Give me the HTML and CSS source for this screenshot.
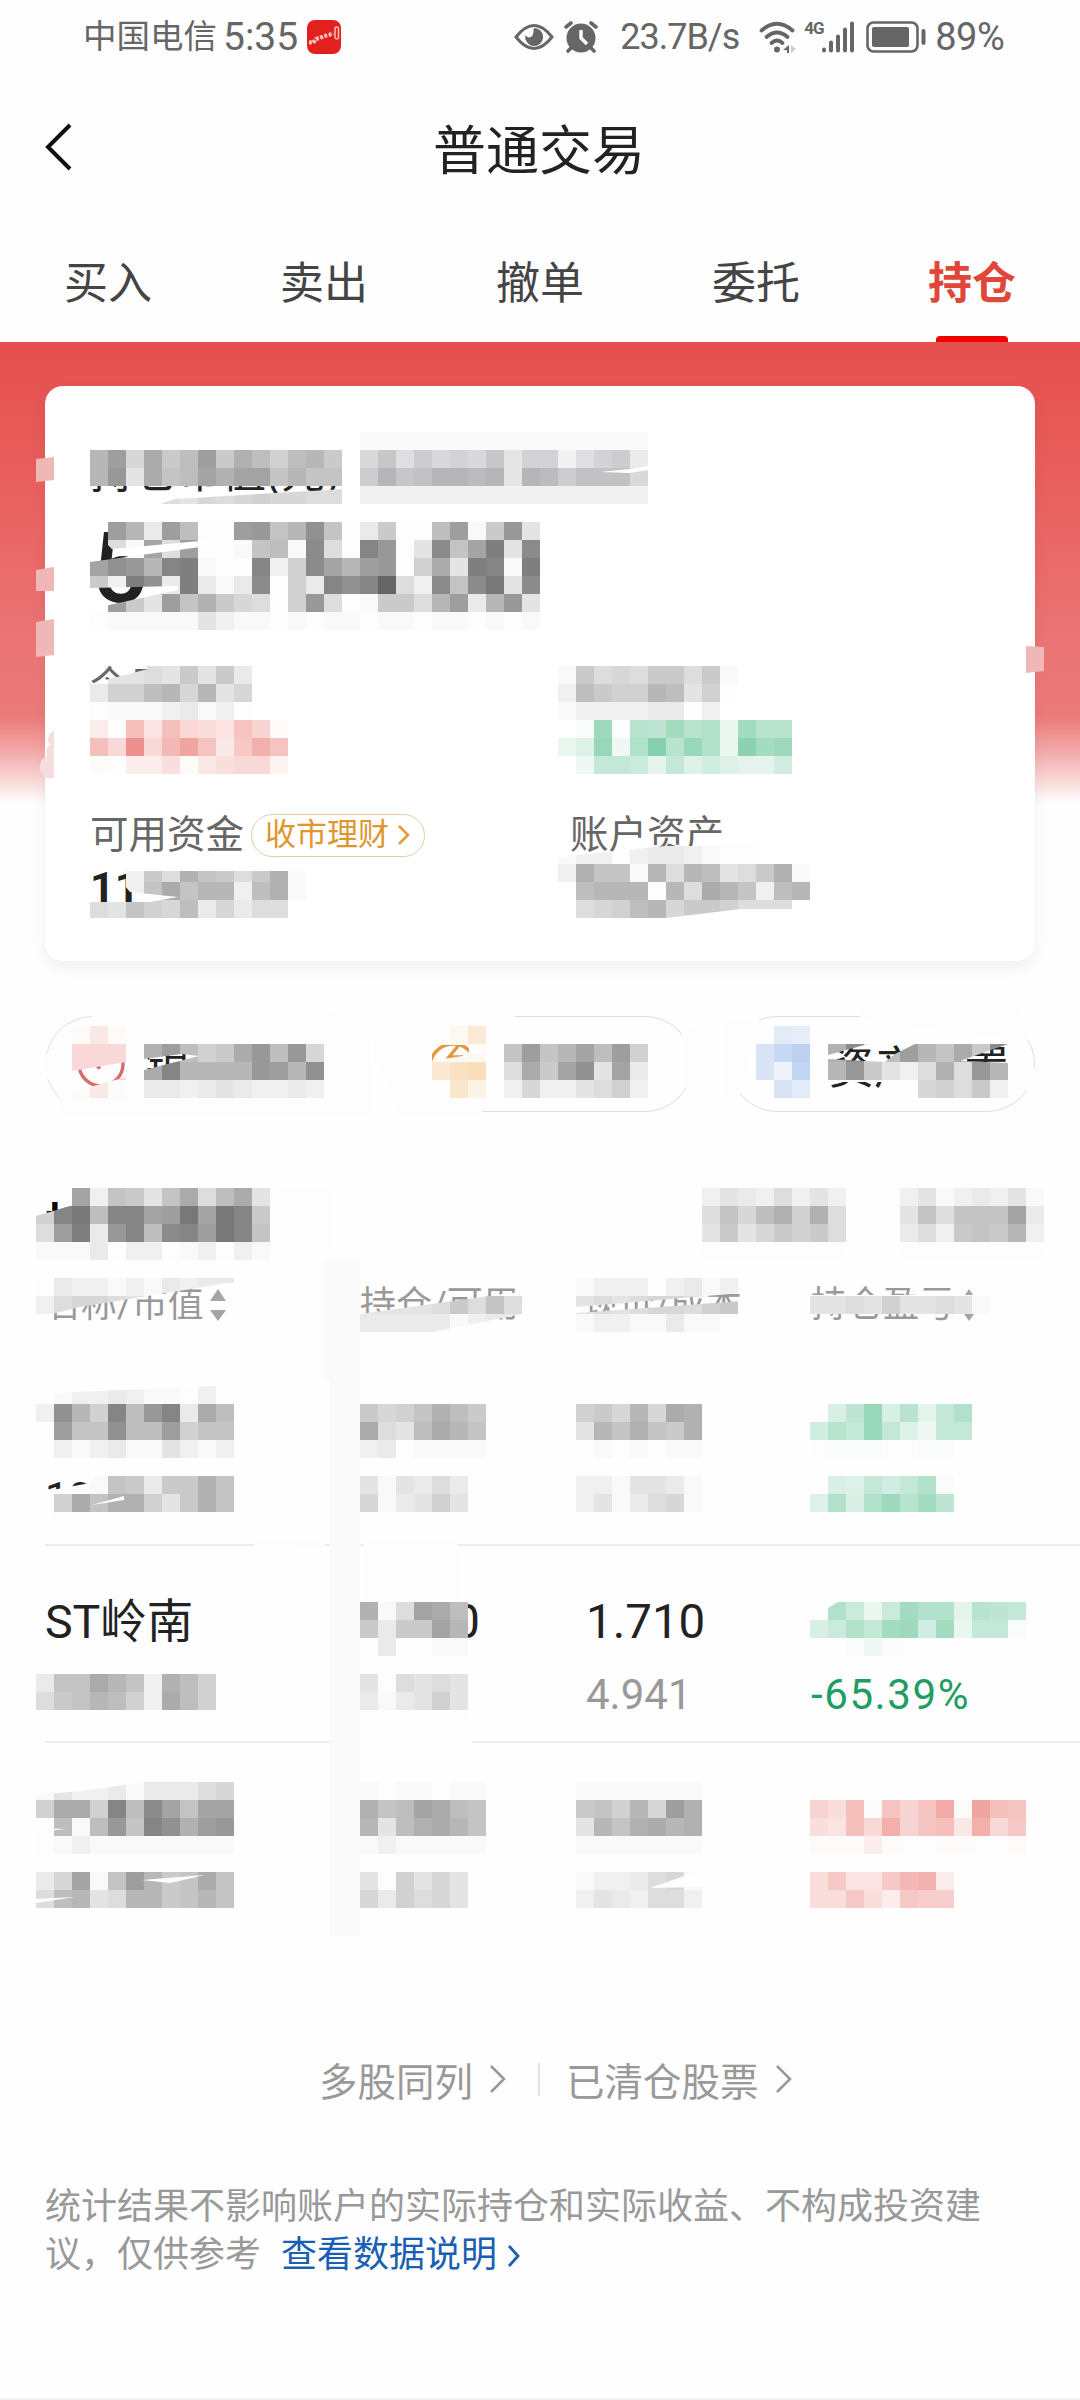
FILE: index.html
```
<!DOCTYPE html>
<html lang="zh-CN">

<head>
  <meta charset="UTF-8">
  <meta name="viewport" content="width=device-width, initial-scale=1.0">
  <title>普通交易</title>
  <link rel="stylesheet" href="styles.css">
</head>

<body>
  <div id="page">
    <header class="statusbar">
      <span class="carrier">中国电信</span>
      <span class="time">5:35</span>
      <svg class="appicon" width="34" height="34" viewBox="0 0 34 34">
        <rect width="34" height="34" rx="8" fill="#e2211f"/>
        <path d="M2 22l4 1 3-4 4-1 4-2 5-1 4-2" fill="none" stroke="#ffc4bc" stroke-width="4" stroke-dasharray="3 1.5"/>
        <rect x="28" y="7" width="3.500" height="12" rx="1.700" fill="none" stroke="#ffc4bc" stroke-width="1.500"/>
      </svg>
      <svg class="eye" width="40" height="28" viewBox="0 0 40 28">
        <path d="M2 14Q20-9 38 14Q20 37 2 14Z" fill="none" stroke="#666" stroke-width="3"/>
        <path d="M20 5a9 9 0 1 1-8.600 7c2 3.500 6 3 7.300 0 1-2.600.600-5 1.300-7z" fill="#666"/>
      </svg>
      <svg class="alarm" width="34" height="32" viewBox="0 0 34 32">
        <circle cx="17" cy="17" r="14.500" fill="#666"/>
        <path d="M2 6l5-4M32 6l-5-4M4 30l4-4M30 30l-4-4" stroke="#666" stroke-width="3.600" stroke-linecap="round"/>
        <path d="M17 9v8l6 6" fill="none" stroke="#fff" stroke-width="3.400"/>
      </svg>
      <span class="speed">23.7B/s</span>
      <svg class="wifi" width="38" height="32" viewBox="0 0 38 32">
        <g fill="none" stroke="#666" stroke-width="3.800" stroke-linecap="round">
          <path d="M2.500 9.500Q18 -4 33.500 9.500"/>
          <path d="M7.500 16Q18 7 28.500 16"/>
          <path d="M12.500 22Q18 17 23.500 22"/>
        </g>
        <circle cx="18" cy="28.500" r="3" fill="#666"/>
        <path d="M30 24v8h-2v-3h-4z" fill="#666"/>
        <path d="M32 24l5 4-5 4z" fill="#ccc"/>
      </svg>
      <span class="net">4G</span>
      <svg class="signal" width="34" height="32" viewBox="0 0 34 32">
        <path d="M3 29.500v-1M10 29.500v-8M17 29.500v-14M24 29.500v-21M31 29.500v-27" stroke="#666" stroke-width="4" stroke-linecap="round"/>
      </svg>
      <svg class="battery" width="60" height="34" viewBox="0 0 60 34">
        <rect x="1.500" y="2.500" width="50" height="29" rx="6" fill="none" stroke="#666" stroke-width="2.600"/>
        <rect x="6" y="7" width="37" height="20" rx="2" fill="#666"/>
        <rect x="55.500" y="9" width="4" height="16" rx="2" fill="#666"/>
      </svg>
      <span class="percent">89%</span>
    </header>

    <div class="navbar">
      <svg class="back" width="30" height="50" viewBox="0 0 30 50">
        <path d="M26 3L4 25l22 22" fill="none" stroke="#111" stroke-width="4"/>
      </svg>
      <h1>普通交易</h1>
    </div>

    <nav class="tabs">
      <a>买入</a>
      <a>卖出</a>
      <a>撤单</a>
      <a>委托</a>
      <a class="active">持仓</a>
    </nav>

    <section class="hero">
      <div class="card">
        <p class="label total">持仓市值(元)</p>
        <p class="bignum">5</p>
        <div class="grid">
          <div>
            <p class="label">今日盈亏</p>
            <p class="value"></p>
          </div>
          <div>
            <p class="label"></p>
            <p class="value"></p>
          </div>
          <div>
            <p class="label">可用资金
              <span class="badge">收市理财
                <svg width="14" height="22" viewBox="0 0 14 22"><path d="M2 2l9 9-9 9" fill="none" stroke="#e09a3a" stroke-width="2.600"/></svg>
              </span>
            </p>
            <p class="value">11</p>
          </div>
          <div>
            <p class="label">账户资产</p>
            <p class="value"></p>
          </div>
        </div>
      </div>
    </section>

    <section class="pills">
      <div class="pill">
        <svg width="54" height="54" viewBox="0 0 54 54">
          <circle cx="28" cy="27" r="22" fill="none" stroke="#d86b6b" stroke-width="3.400"/>
          <path d="M39 24.500H19l8 7" fill="none" stroke="#d86b6b" stroke-width="3.400"/>
        </svg>
        <span>银</span>
      </div>
      <div class="pill">
        <svg width="54" height="54" viewBox="0 0 54 54">
          <circle cx="38" cy="30" r="23" fill="none" stroke="#e39a3a" stroke-width="3.400"/>
          <path d="M43 9l-9 11h14" fill="none" stroke="#e39a3a" stroke-width="3.400"/>
        </svg>
      </div>
      <div class="pill">
        <svg width="54" height="54" viewBox="0 0 54 54"></svg>
        <span>资产配置</span>
      </div>
    </section>

    <section class="holdings">
      <h2>持</h2>
      <div class="row thead">
        <span>名称/市值<svg width="18" height="34" viewBox="0 0 18 34"><path d="M9 1l8 12H1zM9 33l8-11H1z" fill="#a5a5a5"/></svg></span>
        <span>持仓/可用</span>
        <span>现价/成本</span>
        <span>持仓盈亏<svg width="18" height="34" viewBox="0 0 18 34"><path d="M9 1l8 12H1zM9 33l8-11H1z" fill="#a5a5a5"/></svg></span>
      </div>
      <div class="row stock">
        <div><b></b><i class="dark">10</i></div>
        <div><b></b><i></i></div>
        <div><b></b><i></i></div>
        <div><b></b><i></i></div>
      </div>
      <div class="row stock">
        <div><b>ST岭南</b><i></i></div>
        <div><b class="tail">0</b><i></i></div>
        <div><b class="price">1.710</b><i class="cost">4.941</i></div>
        <div><b></b><i class="down">-65.39%</i></div>
      </div>
      <div class="row stock">
        <div><b></b><i></i></div>
        <div><b></b><i></i></div>
        <div><b></b><i></i></div>
        <div><b></b><i></i></div>
      </div>
    </section>

    <div class="more">
      <a>多股同列<svg width="18" height="30" viewBox="0 0 18 30"><path d="M2 2l13 13L2 28" fill="none" stroke="#999" stroke-width="2.600"/></svg></a>
      <span class="sep"></span>
      <a>已清仓股票<svg width="18" height="30" viewBox="0 0 18 30"><path d="M2 2l13 13L2 28" fill="none" stroke="#999" stroke-width="2.600"/></svg></a>
    </div>

    <p class="note">统计结果不影响账户的实际持仓和实际收益、不构成投资建议，仅供参考<a>查看数据说明<svg width="14" height="24" viewBox="0 0 14 24"><path d="M2 2l9 10-9 10" fill="none" stroke="#1b5fb5" stroke-width="2.800"/></svg></a></p>

    <svg id="mosaic" width="1080" height="2400" viewBox="0 0 1080 2400"></svg>
  </div>
  <script src="mosaic.js"></script>
</body>

</html>
```
FILE: styles.css
```
* {
  box-sizing: border-box;
}

body {
  margin: 0;
  background: #fefefe;
  color: #222;
  font-family: Roboto, "Noto Sans CJK SC", sans-serif;
}

h1, h2, p {
  margin: 0;
  font-weight: normal;
}

b, i {
  font-weight: normal;
  font-style: normal;
}

#page {
  position: relative;
  width: 1080px;
  height: 2400px;
  overflow: hidden;
  border-bottom: 2px solid #f2f2f2;
}

#mosaic {
  position: absolute;
  top: 0;
  left: 0;
}

/* ステータスバー */
.statusbar {
  display: flex;
  align-items: center;
  height: 74px;
  padding-left: 83px;
  color: #666;
  font-size: 38px;
  line-height: 76px;
}

.carrier {
  font-size: 33.5px;
}

.time {
  margin-left: 6px;
  font-size: 39px;
}

.appicon {
  margin-left: 9px;
}

.eye {
  margin-left: 173px;
}

.alarm {
  margin-left: 10px;
}

.speed {
  width: 118px;
  margin-left: 22px;
  font-size: 36px;
  letter-spacing: -1px;
  white-space: nowrap;
}

.wifi {
  margin-left: 21px;
}

.net {
  width: 18px;
  margin-left: 7px;
  font-size: 17px;
  font-weight: bold;
  line-height: 20px;
  align-self: flex-start;
  padding-top: 18px;
  letter-spacing: -1px;
}

.signal {
  margin-left: -1px;
}

.battery {
  margin-left: 11px;
}

.percent {
  margin-left: 9px;
  letter-spacing: -0.5px;
}

/* ナビ */
.navbar {
  display: flex;
  align-items: center;
  height: 146px;
  padding-left: 44px;
}

.navbar h1 {
  flex: 1;
  height: 146px;
  padding-right: 76px;
  text-align: center;
  font-size: 53px;
  line-height: 156px;
}

.tabs {
  display: flex;
  height: 122px;
}

.tabs a {
  display: flex;
  flex: 1;
  flex-direction: column;
  align-items: center;
  height: 122px;
  color: #444;
  font-size: 44px;
  line-height: 128px;
}

.tabs .active {
  color: #e0473a;
  font-weight: bold;
}

.tabs .active::after {
  content: "";
  width: 72px;
  height: 6px;
  margin-top: -12px;
  border-radius: 4px 4px 0 0;
  background: #f00000;
}

/* 資産カード */
.hero {
  height: 619px;
  padding: 44px 45px 0;
  background: linear-gradient(#e6504e 0, #e75755 70px, #eb7373 290px, #ec7b7b 375px, #f3aaaa 410px, #fefefe 461px);
}

.card {
  height: 575px;
  padding: 63px 45px 0;
  border-radius: 18px;
  background: #fff;
  box-shadow: 0 6px 16px rgba(0, 0, 0, 0.06);
}

.label {
  display: flex;
  align-items: center;
  height: 48px;
  color: #666;
  font-size: 38.5px;
  line-height: 48px;
}

.total {
  color: #222;
  font-size: 44px;
}

.bignum {
  height: 165px;
  padding-left: 2px;
  font-size: 98px;
  font-weight: 500;
  line-height: 144px;
}

.grid {
  display: grid;
  grid-template-columns: 480px 1fr;
  row-gap: 47px;
}

.value {
  height: 54px;
  font-size: 43px;
  font-weight: 700;
  line-height: 56px;
}

.badge {
  display: flex;
  align-items: center;
  gap: 8px;
  height: 43px;
  margin-left: 7px;
  padding: 0 13px;
  border: 1.5px solid #e5c9a8;
  border-radius: 22px;
  color: #e0962f;
  font-size: 31px;
}

/* 丸ボタン */
.pills {
  display: grid;
  grid-template-columns: repeat(3, 1fr);
  gap: 36px;
  padding: 55px 45px 0;
}

.pill {
  display: flex;
  align-items: center;
  gap: 18px;
  height: 96px;
  padding-left: 27px;
  border: 1.5px solid #ddd;
  border-radius: 48px;
  font-size: 45px;
}

/* 保有一覧 */
.holdings {
  padding-top: 70px;
}

h2 {
  height: 90px;
  padding-left: 45px;
  color: #000;
  font-size: 48px;
  font-weight: bold;
  line-height: 90px;
}

.row {
  display: grid;
  grid-template-columns: 315px 223px 228px 1fr;
  margin-left: 45px;
}

.thead {
  height: 77px;
  color: #999;
  font-size: 36px;
  line-height: 68px;
}

.thead span {
  display: flex;
  align-items: center;
  height: 66px;
  gap: 5px;
}

.stock {
  height: 197px;
  padding-top: 48px;
  border-bottom: 2px solid #eee;
}

.stock:last-child {
  border-bottom: none;
}

.stock b, .stock i {
  display: block;
  height: 56px;
  font-size: 48px;
  line-height: 56px;
}

.stock b {
  font-size: 46.5px;
}

.stock i {
  margin-top: 17px;
  color: #999;
  font-size: 42px;
}

.stock .price {
  padding-left: 3px;
  font-size: 47.5px;
}

.stock .tail {
  padding-left: 93px;
  font-size: 48px;
}

.stock .cost {
  padding-left: 3px;
}

.stock .dark {
  color: #222;
}

.stock .down {
  color: #1f9d62;
  letter-spacing: 1.6px;
}

/* フッター */
.more {
  display: flex;
  align-items: center;
  height: 60px;
  margin-top: 109px;
  padding-left: 319px;
  color: #999;
  font-size: 38.5px;
}

.more a {
  display: flex;
  align-items: center;
  gap: 16px;
}

.sep {
  width: 2px;
  height: 33px;
  margin: 0 26px 0 31px;
  background: #e3e3e3;
}

.note {
  margin-top: 74px;
  padding: 0 90px 0 45px;
  color: #999;
  font-size: 36px;
  line-height: 48px;
}

.note a {
  display: inline-block;
  margin-left: 20px;
  color: #1b5fb5;
}

.note svg {
  margin-left: 10px;
  vertical-align: -1px;
}
```
FILE: mosaic.js
```
const NS = "http://www.w3.org/2000/svg";
const CELL = 18;

const base = {
  gray: [0, 0, 0],
  red: [225, 45, 35],
  green: [0, 158, 85],
  orange: [240, 150, 30],
  blue: [70, 130, 220],
  cool: [15, 15, 25]
};

// [x, y, 色, 行...] 文字は濃さ（a=白, z=濃い）、「.」は透明
const patches = [
  [360, 432, "cool", "bbbbbbbbbbbbbbbb"],
  [90, 450, "gray", "lpgnikpimkhkli"],
  [360, 450, "cool", "gjfighgjehhcfhid", "imjkmmlmemlikkkg", "cccccccccccccccc"],
  [90, 468, "gray", "lqenjkomoojljj", "....fegfghggff"],
  [90, 522, "gray",
    ".pldpkaapqjlrjadiaakpbiqe",
    ".fbofpaabjkbsfatqaesjoues",
    "orqltubaatchsolpqahneutbu",
    "icurdudbdsahdtrtyfcsjsves",
    ".piepjmigfahqfabiiflpdlqe",
    "abbbbbecbbababbabbabbabab"],
  [90, 666, "gray", ".eefeieid", "dhhklgleg", "abbbcdbca"],
  [90, 720, "red", "damfmhgflib", "mhvhnrlekpl", "baddgbeghhc"],
  [558, 666, "gray", "bifgfiifib", "ckihhlkeha", "bccccddac"],
  [558, 720, "green", ".bpalkolmdoll", "dfqcmtlqmdsop", ".cjjiejfhfeeh"],
  [90, 864, "gray", "..cifmjifimb", "..cjnjllckmb", "fejhgkdgdff"],
  [558, 846, "gray", "bccacddcb", "cmjjblflkefimb", ".klllalfnljckl", ".fghklgiihfff"],
  [72, 1026, "red", "beb", "hhh", "hhh", "beb"],
  [144, 1044, "gray", "mpkhinqkqg", "ntllllqplr", "ddcdedccdc"],
  [432, 1026, "orange", "ach", "ccc", "ikm", "aje"],
  [504, 1044, "gray", "jpjlokph", "fnioreod", "cgccefhc"],
  [756, 1026, "blue", "agf", "imo", "idn", ".ig"],
  [828, 1044, "gray", "mshkpljnis", "lqiecfmfql", ".....ghfic"],
  [54, 1188, "gray", ".ocjiejnfkne", "tvkttopvovti", "pudqtkstpvtj", "bbdaccabcacb"],
  [36, 1206, "gray", "h", "f", "b"],
  [702, 1188, "gray", "cedcfcec", "fjgkmhmf", "eiegihif", "aaaaaaaa"],
  [900, 1188, "gray", "cebcdceb", "ejfjjjod", "dfcijilc", "aaaaaaaa"],
  [54, 1278, "gray", "dccbcbdcdd", "fggfee"],
  [36, 1296, "gray", "c"],
  [360, 1296, "gray", "eeeefifjf", "dddddbcdd"],
  [576, 1278, "gray", "bcccacdbc", "efefggfhi", "bccbbdbba"],
  [810, 1296, "gray", "eefeheefeb"],
  // 1行目
  [54, 1386, "gray", "bccdcbbac", "rlhtkqtdnk", "pjjrkkphjj", "cbcdbbecbc"],
  [36, 1404, "gray", "c"],
  [54, 1476, "gray", "..bjidiimj", "hnjmmheimj"],
  [360, 1404, "gray", "ighjmki", "nfeknlj", "cdabbbb"],
  [360, 1476, "gray", "ebedfd", "gbdehe"],
  [576, 1404, "gray", "higlgnm", "eljmjim", "abababb"],
  [576, 1476, "gray", "ccbeedb", "cebdfgb"],
  [810, 1404, "green", ".gkqglejm", "hljqjfcjj", "abbbaabb"],
  [810, 1476, "green", ".gfjhjmb", "fmgmplok"],
  // 2行目
  [36, 1674, "gray", "djjnljcmkh", "fijlkhcnkh"],
  [360, 1602, "gray", "mbfonk", "idiiol", "adaabb"],
  [360, 1674, "gray", "eafefe", "dbdehe"],
  [810, 1602, "green", ".midiommelkj", "gimjophodjjb", "..bcbaa"],
  // 3行目
  [36, 1782, "gray", "beccdbdddfg", "hnnhtksojoo", "akbkqjtrmpq", "abcbbbbbbbb"],
  [36, 1872, "gray", "dgobjplijnj", "fklefllijlj"],
  [360, 1782, "gray", "babbabb", "mjkonkj", "lekmnlj", "bcbbbbb"],
  [360, 1872, "gray", "eahege", "gdhfge"],
  [576, 1782, "gray", "bbbbbbb", "ijhlgpm", "eljmnlm", "bbbbbbb"],
  [576, 1872, "gray", "bccdfgb", "cedcffc"],
  [810, 1800, "red", "igmblilqbrml", "gfmhpilmephk", "bbbdbaabbaab"],
  [810, 1872, "red", "gkffknod", "ggkgdkjj"]
];

// マスクの切れ目。下の文字が見える部分
const holes = [
  "90,486 345,486 345,489 175,499 160,504 90,504",
  "600,472 630,469 648,466 648,470 630,473",
  "90,522 108,522 103,540 112,549 200,541 255,543 200,547 90,562",
  "90,588 178,586 178,590 100,607 90,611",
  "90,666 146,666 148,669 90,684",
  "90,864 310,864 310,871 124,871 120,880 130,892 178,897 150,902 90,902",
  "558,840 720,840 665,846 558,857",
  "666,918 741,909 830,909 830,918",
  "72,1071 126,1062 126,1077 72,1092",
  "144,1059 181,1054 199,1056 144,1070",
  "432,1045 486,1045 486,1052 432,1061",
  "828,1055 868,1044 915,1044 895,1054 885,1062 828,1059",
  "960,1061 1008,1044 1008,1063",
  "828,1082 918,1082 918,1098 828,1098",
  "36,1188 70,1188 70,1206 36,1216",
  "36,1332 36,1318 80,1307 228,1283 250,1283 250,1332",
  "360,1280 525,1280 525,1291 360,1314",
  "432,1332 522,1314 522,1332",
  "576,1307 742,1293 742,1301 576,1313",
  "54,1386 216,1386 54,1393",
  "36,1476 96,1476 90,1483 36,1493",
  "92,1505 124,1496 124,1500",
  "36,1782 144,1782 90,1790 36,1795",
  "36,1828 66,1829 36,1832",
  "142,1880 205,1875 170,1883",
  "36,1899 75,1897 36,1903",
  "650,1888 690,1874 702,1872 702,1887",
  "810,1602 838,1602 828,1608"
];

const svg = document.getElementById("mosaic");
const mask = add(add(svg, "defs"), "mask", { id: "cut", maskUnits: "userSpaceOnUse", x: 0, y: 0, width: 1080, height: 2400 });
add(mask, "rect", { width: 1080, height: 2400, fill: "#fff" });
for (const points of holes) {
  add(mask, "polygon", { points, fill: "#000" });
}
const layer = add(svg, "g", { mask: "url(#cut)", "shape-rendering": "crispEdges" });

// 縦のうっすらした帯
box(layer, 324, 1260, 36, 120, "#fafafa");
box(layer, 330, 1380, 30, 556, "#fafafa");

// 白で消した部分
for (const points of [
  "90,666 252,666 252,720 90,720",
  "558,858 760,842 760,864 558,864",
  "108,1010 330,1010 370,1040 370,1116 60,1116 60,1093 42,1072 42,1062 60,1030",
  "375,1010 525,1010 450,1060 485,1116 400,1116 385,1080 375,1060",
  "860,1020 860,1010 1020,1010 1028,1040 1018,1040",
  "725,1020 760,1020 740,1094 725,1094",
  "1028,1068 1040,1068 1040,1090 1020,1090",
  "682,1028 696,1028 696,1088 686,1088",
  "144,1044 324,1044 324,1098 144,1098",
  "828,1062 1008,1062 1008,1082 828,1082",
  "54,1196 330,1188 330,1250 36,1250 36,1216",
  "36,1278 240,1278 36,1318",
  "360,1314 525,1291 525,1302 432,1332 360,1332",
  "576,1278 745,1278 745,1335 576,1335",
  "810,1295 990,1295 990,1314 810,1314",
  "54,1486 120,1476 120,1520 54,1520",
  "254,1540 325,1540 325,1546 290,1550 254,1550",
  "364,1540 457,1540 465,1660 472,1745 360,1745 360,1660"
]) {
  add(layer, "polygon", { points, fill: "#fdfdfd" });
}

for (const [x, y, tone, ...rows] of patches) {
  rows.forEach((row, r) => {
    [...row].forEach((ch, c) => {
      if (ch === ".") return;
      const n = ch.charCodeAt(0) - 97;
      const k = n === 1 ? 0.014 : n * 0.025;
      const rgb = base[tone].map(v => Math.round(253 - k * (253 - v)));
      box(layer, x + c * CELL, y + r * CELL, CELL, CELL, `rgb(${rgb})`);
    });
  });
}

// カードの縁にかかったにじみ
for (const points of [
  "36,459 54,457 54,480 36,482",
  "36,570 54,567 54,591 36,591",
  "36,622 54,619 54,655 36,657",
  "1026,646 1044,647 1044,671 1026,673"
]) {
  add(svg, "polygon", { points, fill: "#f0b7b7" });
}
add(svg, "path", { d: "M54 731a9 9 0 0 0-4 14q-5 3-3 11-9 4-7 15 4 9 14 7z", fill: "#f6dcdc" });

function add(parent, name, attrs = {}) {
  const el = document.createElementNS(NS, name);
  for (const key in attrs) {
    el.setAttribute(key, attrs[key]);
  }
  parent.appendChild(el);
  return el;
}

function box(parent, x, y, width, height, fill) {
  return add(parent, "rect", { x, y, width, height, fill });
}
```
